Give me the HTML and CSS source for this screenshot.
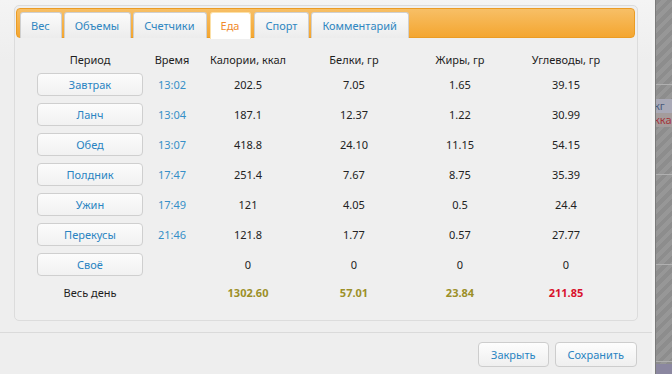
FILE: index.html
```html
<!DOCTYPE html>
<html lang="ru">
<head>
    <meta charset="UTF-8">
    <title>Дневник питания</title>
    <link rel="stylesheet" href="styles.css">
</head>
<body>
    <div class="screen">
        <div class="dialog">
            <div class="panel">
                <ul class="tabs">
                    <li class="tab">Вес</li>
                    <li class="tab">Объемы</li>
                    <li class="tab">Счетчики</li>
                    <li class="tab active">Еда</li>
                    <li class="tab">Спорт</li>
                    <li class="tab">Комментарий</li>
                </ul>
                <table class="food">
                    <thead>
                        <tr>
                            <th class="c-period">Период</th>
                            <th class="c-time">Время</th>
                            <th class="c-num">Калории, ккал</th>
                            <th class="c-num2">Белки, гр</th>
                            <th class="c-num">Жиры, гр</th>
                            <th class="c-num2">Углеводы, гр</th>
                        </tr>
                    </thead>
                    <tbody>
                        <tr>
                            <td><span class="meal">Завтрак</span></td>
                            <td class="time">13:02</td>
                            <td>202.5</td><td>7.05</td><td>1.65</td><td>39.15</td>
                        </tr>
                        <tr>
                            <td><span class="meal">Ланч</span></td>
                            <td class="time">13:04</td>
                            <td>187.1</td><td>12.37</td><td>1.22</td><td>30.99</td>
                        </tr>
                        <tr>
                            <td><span class="meal">Обед</span></td>
                            <td class="time">13:07</td>
                            <td>418.8</td><td>24.10</td><td>11.15</td><td>54.15</td>
                        </tr>
                        <tr>
                            <td><span class="meal">Полдник</span></td>
                            <td class="time">17:47</td>
                            <td>251.4</td><td>7.67</td><td>8.75</td><td>35.39</td>
                        </tr>
                        <tr>
                            <td><span class="meal">Ужин</span></td>
                            <td class="time">17:49</td>
                            <td>121</td><td>4.05</td><td>0.5</td><td>24.4</td>
                        </tr>
                        <tr>
                            <td><span class="meal">Перекусы</span></td>
                            <td class="time">21:46</td>
                            <td>121.8</td><td>1.77</td><td>0.57</td><td>27.77</td>
                        </tr>
                        <tr>
                            <td><span class="meal">Своё</span></td>
                            <td class="time"></td>
                            <td>0</td><td>0</td><td>0</td><td>0</td>
                        </tr>
                        <tr class="total">
                            <td>Весь день</td>
                            <td></td>
                            <td class="ok">1302.60</td>
                            <td class="ok">57.01</td>
                            <td class="ok">23.84</td>
                            <td class="over">211.85</td>
                        </tr>
                    </tbody>
                </table>
            </div>
            <div class="footer">
                <button class="btn">Закрыть</button>
                <button class="btn">Сохранить</button>
            </div>
        </div>
        <div class="backdrop">
            <div class="bd-line first"></div>
            <div class="bd-row unit">кг</div>
            <div class="bd-row kcal">кка</div>
            <div class="bd-line second"></div>
            <div class="bd-line third"></div>
            <div class="bd-line fourth"></div>
            <div class="bd-foot"></div>
        </div>
    </div>
</body>
</html>
```

FILE: styles.css
```css
html, body {
    margin: 0;
    padding: 0;
}
body {
    font-family: "Noto Sans", "DejaVu Sans", sans-serif;
    font-size: 11px;
    color: #222;
    background: #eee;
}
.screen {
    display: flex;
    width: 672px;
    height: 374px;
    overflow: hidden;
}
.dialog {
    width: 655px;
    flex: none;
    box-sizing: border-box;
    padding: 5px 14px 0 14px;
    background: linear-gradient(#f4f4f4, #eeeeee 60px);
    border-right: 3px solid #f3f3f3;
}
.panel {
    height: 316px;
    box-sizing: border-box;
    border: 1px solid #dcdcdc;
    border-radius: 5px;
    padding: 2px 2px 0 1px;
    background: #efefef;
}

/* tabs */
.tabs {
    display: flex;
    list-style: none;
    margin: 0;
    height: 30px;
    box-sizing: border-box;
    padding: 3px 3px 0 3px;
    border: 1px solid #eb9c24;
    border-radius: 4px;
    background: linear-gradient(#f7bf66, #f4a630);
}
.tab {
    height: 26px;
    box-sizing: border-box;
    margin-right: 2px;
    padding: 0 11px 0 10px;
    line-height: 25px;
    color: #2f86c1;
    background: linear-gradient(#fbfbfb, #ececec);
    border: 1px solid #cfcfcf;
    border-bottom: none;
    border-radius: 3px 3px 0 0;
}
.tab.active {
    height: 27px;
    margin-left: 1px;
    margin-right: 3px;
    color: #f08a2a;
    background: #fff;
    border-color: #fbe0a8;
}

/* table */
.food {
    border-collapse: collapse;
    margin: 12px 0 0 14px;
    table-layout: fixed;
}
.food th {
    font-weight: normal;
    color: #1e1e1e;
    height: 19px;
    padding: 0;
    text-align: center;
}
.food td {
    height: 30px;
    padding: 0;
    text-align: center;
}
.c-period { width: 120px; }
.c-time { width: 44px; }
.c-num { width: 108px; }
.c-num2 { width: 104px; }
.meal {
    display: block;
    width: 106px;
    height: 23px;
    box-sizing: border-box;
    margin: 0 auto;
    line-height: 21px;
    color: #2a84c2;
    background: linear-gradient(#fcfcfc, #f1f1f1);
    border: 1px solid #cfcfcf;
    border-radius: 4px;
}
.time {
    color: #368fc7;
}
.total td {
    height: 26px;
    color: #1e1e1e;
}
.total .ok {
    color: #9c8f28;
    font-weight: bold;
}
.total .over {
    color: #d9122c;
    font-weight: bold;
}

/* footer */
.footer {
    display: flex;
    justify-content: flex-end;
    gap: 6px;
    margin: 11px -14px 0 -14px;
    padding: 9px 15px 0 0;
    border-top: 1px solid #dadada;
}
.btn {
    font-family: inherit;
    font-size: 11px;
    height: 25px;
    padding: 0 12px;
    color: #2a84c2;
    background: linear-gradient(#fdfdfd, #efefef);
    border: 1px solid #cdcdcd;
    border-radius: 4px;
}

/* page behind the dialog */
.backdrop {
    flex: 1;
    display: flex;
    flex-direction: column;
    border-left: 1px solid #7a7a7a;
    background: repeating-linear-gradient(135deg, #8d8d8d 0 4px, #979797 4px 8px);
    overflow: hidden;
}
.bd-line {
    height: 1px;
    background: #b0b0b0;
    flex: none;
}
.bd-line.first { margin-top: 84px; }
.bd-row {
    height: 14px;
    line-height: 14px;
    text-indent: -2px;
    white-space: nowrap;
    font-size: 11px;
}
.bd-row.unit {
    margin-top: 14px;
    color: #4a5a7a;
    background: #a9a9b6;
}
.bd-row.kcal {
    color: #a4353a;
    background: #a49c9c;
}
.bd-line.second { margin-top: 47px; }
.bd-line.third { margin-top: 89px; }
.bd-line.fourth { margin-top: 96px; }
.bd-foot {
    margin-top: 2px;
    flex: 1;
    background: #8b87a0;
}
```
